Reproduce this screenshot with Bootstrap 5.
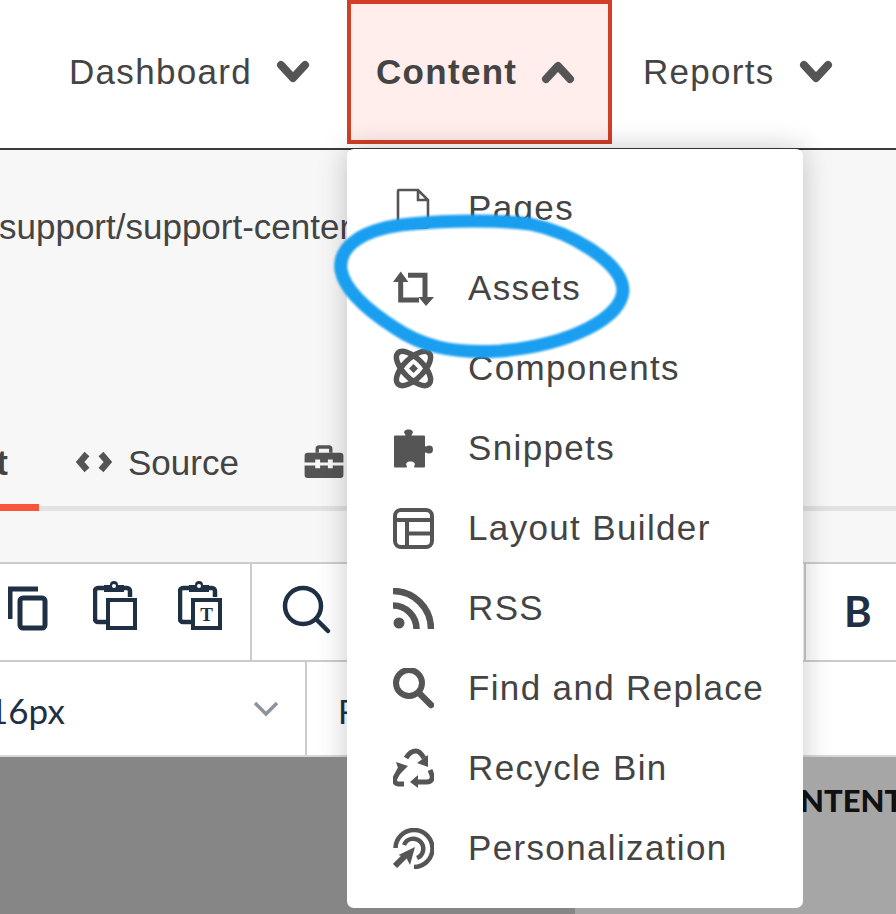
<!DOCTYPE html>
<html lang="en">
<head>
<meta charset="utf-8">
<title>Content menu</title>
<link href="https://cdn.jsdelivr.net/npm/bootstrap@5.3.0/dist/css/bootstrap.min.css" rel="stylesheet">
<style>
html,body{margin:0;background:#fff;overflow:hidden}
.app-frame{position:relative;width:896px;height:914px;overflow:hidden;font-family:"Liberation Sans",Arial,sans-serif;color:#444}
.top-head{height:150px;border-bottom:2px solid #3a3a3a;background:#fff;padding-left:69px}
.top-link{color:#444;font-size:35px;letter-spacing:1.3px;line-height:40px;padding:0}
.top-link:hover{color:#444}
.top-link.plain{height:144px}
.top-link.plain svg{margin-left:24px}
.first-link{width:278px}
.active-link{width:265px;height:144px;box-sizing:border-box;margin-right:31px;padding-left:25px;background:#ffeeec;border:4px solid #d13f26;font-weight:700;color:#444}
.active-link svg{margin-left:24px}
.url-pane{height:412px;background:#f7f7f7;display:flex;flex-direction:column}
.url-text{font-size:35px;line-height:40px;margin-top:57px;margin-left:-1px;height:40px;white-space:nowrap;color:#444}
.tab-row{margin-top:auto;height:89px;border-bottom:5px solid #e2e2e2;position:relative;margin-bottom:51px}
.tab-cur{width:39px;height:89px;margin-bottom:-5px;border-bottom:7px solid #f9553c;padding-right:31px;overflow:hidden;justify-content:flex-end;font-weight:700;font-size:35px;line-height:40px;padding-top:21px;box-sizing:border-box;position:relative;z-index:1}
.tab-src{font-size:35px;line-height:40px;padding:21px 0 0 37px;color:#444;height:84px;box-sizing:border-box}
.tab-src svg{margin-right:16px}
.tab-tool{padding:23px 0 0 65px}
.tool-row{height:98px;background:#fff;border-top:2px solid #ccc;border-bottom:0}
.tool-row+.tool-row{height:97px;border-bottom:2px solid #d8d8d8}
.tool-a{width:252px;height:96px;border-right:2px solid #ccc;box-sizing:border-box}
.tool-icon{display:block;margin-top:21px}
.tool-b{width:552px}
.tool-c{flex:1;border-left:2px solid #ccc;color:#1f3044;font-family:Lato,sans-serif;font-weight:700;font-size:42px;line-height:50px;padding:22px 0 0 38px;height:98px;margin-top:0}
.size-cell{width:307px;border-right:2px solid #ccc;color:#1f3044;font-family:Lato,sans-serif;font-size:35px;line-height:40px;padding-top:28px;box-sizing:border-box;position:relative;overflow:hidden}
.size-txt{margin-left:-12px}
.size-chev{position:absolute;left:253px;top:39px}
.font-cell{color:#1f3044;font-family:Lato,sans-serif;font-size:33px;line-height:40px;padding:29px 0 0 31px}
.dim-zone{height:157px;position:relative;z-index:4}
.dim-left{width:575px;background:#868686}
.dim-right{flex:1;background:#a6a6a6;color:#111;font-family:Lato,sans-serif;font-weight:900;font-size:31px;line-height:40px;padding:23px 0 0 180px;white-space:nowrap;overflow:hidden}
.menu-shade{position:absolute;left:347px;top:149px;width:456px;height:759px;border-radius:7px;box-shadow:0 0 30px rgba(0,0,0,.22);z-index:3}
.menu-pop.dropdown-menu{position:absolute;left:347px;top:149px;width:456px;height:759px;padding:19px 0 0;margin:0;border:0;border-radius:7px;z-index:5;background:#fff}
.menu-line{display:flex;align-items:center;height:80px;padding:0 0 0 46px;font-size:35px;line-height:40px;letter-spacing:1.35px;color:#444;background:none}
.menu-line:hover{background:none;color:#444}
.menu-line svg{flex:none;width:41px;height:41px;margin-right:34px}
.ink{position:absolute;left:0;top:0;z-index:6;pointer-events:none;filter:blur(.8px)}
</style>
</head>
<body>
<div class="app-frame">
  <header class="top-head d-flex align-items-start">
    <a href="#" class="nav-link top-link plain first-link d-flex align-items-center">Dashboard
      <svg width="34" height="24" viewBox="0 0 34 24"><path d="M5 5l12 13L29 5" fill="none" stroke="#555" stroke-width="8" stroke-linecap="round" stroke-linejoin="round"/></svg></a>
    <a href="#" class="nav-link top-link active-link d-flex align-items-center">Content
      <svg width="34" height="24" viewBox="0 0 34 24"><path d="M5 19L17 6l12 13" fill="none" stroke="#555" stroke-width="8" stroke-linecap="round" stroke-linejoin="round"/></svg></a>
    <a href="#" class="nav-link top-link plain d-flex align-items-center">Reports
      <svg width="34" height="24" viewBox="0 0 34 24"><path d="M5 5l12 13L29 5" fill="none" stroke="#555" stroke-width="8" stroke-linecap="round" stroke-linejoin="round"/></svg></a>
  </header>

  <section class="url-pane">
    <div class="url-text">support/support-center</div>
    <div class="tab-row d-flex">
      <div class="tab-cur d-flex">Content</div>
      <div class="tab-src d-flex align-items-start">
        <svg class="mt-2" width="36" height="22" viewBox="0 0 36 22"><path d="M11 3L4 11l7 8M25 3l7 8-7 8" fill="none" stroke="#555" stroke-width="6.500" stroke-linejoin="miter"/></svg>Source
      </div>
      <div class="tab-tool">
        <svg width="40" height="33" viewBox="0 0 40 34"><path d="M13 8V4a2 2 0 0 1 2-2h10a2 2 0 0 1 2 2v4" fill="none" stroke="#555" stroke-width="3.500"/><path d="M3 8h34a3 3 0 0 1 3 3v7H29v-3h-5v3H16v-3h-5v3H0v-7a3 3 0 0 1 3-3zM0 21h11v3h5v-3h8v3h5v-3h11v10a3 3 0 0 1-3 3H3a3 3 0 0 1-3-3z" fill="#555"/></svg>
      </div>
    </div>
  </section>

  <div class="tool-row d-flex">
    <div class="tool-a position-relative d-flex">
      <svg class="tool-icon" style="margin-left:8px" width="40" height="46" viewBox="0 0 40 46"><path d="M2 34V4h28" fill="none" stroke="#1f3044" stroke-width="5"/><rect x="12" y="13" width="25" height="30" rx="3" fill="none" stroke="#1f3044" stroke-width="5"/></svg>
      <svg class="tool-icon" style="margin-left:45px;margin-top:15px" width="44" height="52" viewBox="0 0 44 52"><path d="M13 43H5a3 3 0 0 1-3-3V12a3 3 0 0 1 3-3h29a3 3 0 0 1 3 3v6" fill="none" stroke="#1f3044" stroke-width="4.500"/><path d="M11 6h6a4 4 0 0 1 8 0h6v7H11z" fill="#1f3044"/><circle cx="21" cy="7" r="2" fill="#fff"/><rect x="15" y="21" width="27" height="28" fill="#fff" stroke="#1f3044" stroke-width="4"/></svg>
      <svg class="tool-icon" style="margin-left:41px;margin-top:15px" width="44" height="52" viewBox="0 0 44 52"><path d="M13 43H5a3 3 0 0 1-3-3V12a3 3 0 0 1 3-3h29a3 3 0 0 1 3 3v6" fill="none" stroke="#1f3044" stroke-width="4.500"/><path d="M11 6h6a4 4 0 0 1 8 0h6v7H11z" fill="#1f3044"/><circle cx="21" cy="7" r="2" fill="#fff"/><rect x="15" y="21" width="27" height="28" fill="#fff" stroke="#1f3044" stroke-width="4"/><text x="28.500" y="42" text-anchor="middle" font-family="Liberation Serif,serif" font-weight="700" font-size="19" fill="#1f3044">T</text></svg>
    </div>
    <div class="tool-b position-relative">
      <svg class="tool-icon" style="margin-left:30px" width="50" height="50" viewBox="0 0 50 50"><circle cx="21" cy="21" r="18" fill="none" stroke="#1f3044" stroke-width="4.500"/><path d="M34 34l12 12" stroke="#1f3044" stroke-width="4.500" stroke-linecap="round"/></svg>
    </div>
    <div class="tool-c">B</div>
  </div>
  <div class="tool-row d-flex">
    <div class="size-cell"><span class="size-txt">16px</span>
      <svg class="size-chev" width="26" height="16" viewBox="0 0 26 16"><path d="M2 2l11 11L24 2" fill="none" stroke="#8c949c" stroke-width="3.500"/></svg>
    </div>
    <div class="font-cell">F</div>
  </div>
  <div class="dim-zone d-flex">
    <div class="dim-left"></div>
    <div class="dim-right">CONTENT</div>
  </div>

  <div class="menu-shade"></div>
  <nav class="dropdown-menu show menu-pop">
    <a class="dropdown-item menu-line" href="#"><svg viewBox="0 0 41 41"><path d="M6 2h19l10 10v26a1.500 1.500 0 0 1-1.500 1.500h-27A1.500 1.500 0 0 1 5 38V3a1 1 0 0 1 1-1zM25 2v10h10" fill="none" stroke="#555" stroke-width="2.600"/></svg>Pages</a>
    <a class="dropdown-item menu-line" href="#"><svg viewBox="0 0 41 41"><path d="M7.700 12v20H26M15 7.200h17V30" fill="none" stroke="#555" stroke-width="5"/><path d="M0 14L7.700 3.500 15.400 14zM25.500 29l7.500 9 8-9z" fill="#555"/></svg>Assets</a>
    <a class="dropdown-item menu-line" href="#"><svg viewBox="0 0 41 41"><g fill="none" stroke="#555" stroke-width="5.500"><ellipse cx="20.500" cy="20.500" rx="22" ry="10" transform="rotate(45 20.500 20.500)"/><ellipse cx="20.500" cy="20.500" rx="22" ry="10" transform="rotate(-45 20.500 20.500)"/></g><path d="M20.500 16l4.500 4.500-4.500 4.500-4.500-4.500z" fill="#555"/></svg>Components</a>
    <a class="dropdown-item menu-line" href="#"><svg viewBox="0 0 41 41"><path d="M1 8.500a1 1 0 0 1 1-1h10c1 0 .5-1-.5-2-1-1.500 0-4 4-4s5 2.500 4 4c-1 1-1.500 2-.5 2h12a1 1 0 0 1 1 1v9c0 1.500 1 1 2 .5 2-1 6-1 6 3.500s-4 4.500-6 3.500c-1-.5-2-1-2 .5v13a1 1 0 0 1-1 1h-9c-1.500 0-1-1-.5-2 1-2-.5-4-4-4s-5 2-4 4c.5 1 1 2-.5 2H2a1 1 0 0 1-1-1z" fill="#555"/></svg>Snippets</a>
    <a class="dropdown-item menu-line" href="#"><svg viewBox="0 0 41 41"><rect x="2" y="2" width="37" height="37" rx="6" fill="none" stroke="#555" stroke-width="4"/><path d="M2 12h37M14 12v27M14 25.500h25" fill="none" stroke="#555" stroke-width="4"/></svg>Layout Builder</a>
    <a class="dropdown-item menu-line" href="#"><svg viewBox="0 0 41 41"><circle cx="6" cy="35" r="5.500" fill="#555"/><path d="M0 17.500A23.500 23.500 0 0 1 23.500 41M0 3a38 38 0 0 1 38 38" fill="none" stroke="#555" stroke-width="6.500"/></svg>RSS</a>
    <a class="dropdown-item menu-line" href="#"><svg viewBox="0 0 41 41"><circle cx="16" cy="15" r="13" fill="none" stroke="#555" stroke-width="6"/><path d="M26 25l12 12" stroke="#555" stroke-width="6.500" stroke-linecap="round"/></svg>Find and Replace</a>
    <a class="dropdown-item menu-line" href="#"><svg viewBox="0 0 41 41"><g fill="none" stroke="#555" stroke-width="5"><path d="M13 10c3-5 6-7 10-7 3 0 5 2 8 7"/><path d="M24 34h10c4 0 6-3 5-7l-2-5"/><path d="M11 36H6c-4 0-5-3-4-6l5-9"/></g><path d="M35 7v12l-11-4zM17 34l8-7v13zM3 14l12 4-8 8z" fill="#555"/></svg>Recycle Bin</a>
    <a class="dropdown-item menu-line" href="#"><svg viewBox="0 0 41 41"><g fill="none" stroke="#555" stroke-width="4.500"><path d="M2.500 20A18.500 18.500 0 1 1 21 39"/><path d="M11 17A10 10 0 1 1 24 30"/></g><path d="M2 38l12-12" stroke="#555" stroke-width="6"/><path d="M22 19l-5 18-3.500-7-8-3z" fill="#555"/></svg>Personalization</a>
  </nav>

  <svg class="ink" width="896" height="914" viewBox="0 0 896 914"><path d="M341 270C338 245 365 228 410 224C450 220 500 220 530 224C570 232 622 262 623 290C622 318 570 345 500 351C450 354 420 345 395 328C370 312 345 292 341 270Z" fill="none" stroke="#1a9ff0" stroke-width="13" stroke-linejoin="round"/></svg>
</div>
<script src="https://cdn.jsdelivr.net/npm/bootstrap@5.3.0/dist/js/bootstrap.bundle.min.js"></script>
</body>
</html>
